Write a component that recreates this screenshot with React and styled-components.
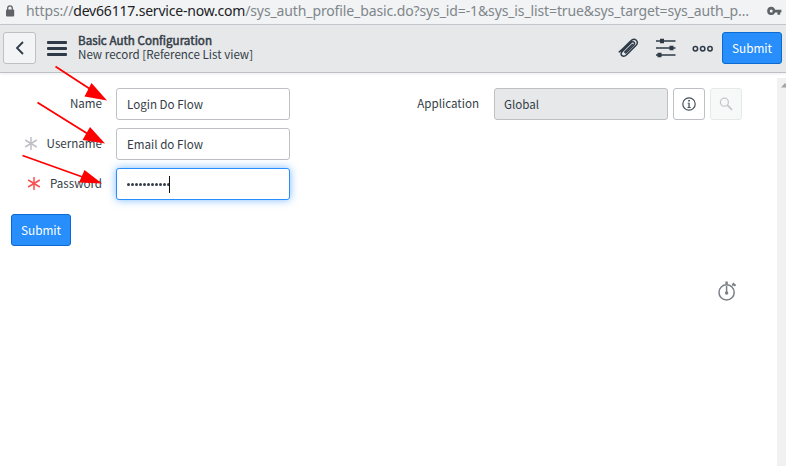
import React from "react";
import styled, { createGlobalStyle, css } from "styled-components";

const GlobalStyle = createGlobalStyle`
  * { box-sizing: border-box; }
  body {
    margin: 0;
    overflow: hidden;
    background: #fff;
    font-family: "Noto Sans CJK SC", "Noto Sans", sans-serif;
    font-size: 11.6px;
    color: #343d47;
  }
  button, input { font: inherit; color: inherit; margin: 0; }
  svg { flex: none; }
`;

const Window = styled.div`
  position: relative;
  width: 786px;
  height: 466px;
  display: flex;
  flex-direction: column;
  overflow: hidden;
`;

const AddressBar = styled.div`
  height: 25px;
  flex: none;
  display: flex;
  align-items: center;
  padding: 0 4px 3px 5px;
  background: #f1f3f4;
  border-bottom: 1px solid #c6c8d0;
`;

const Url = styled.div`
  margin-left: 11px;
  flex: 1;
  font-family: "Noto Sans", sans-serif;
  font-size: 14px;
  line-height: 20px;
  letter-spacing: -0.12px;
  white-space: nowrap;
  color: #80868b;
`;

const Host = styled.span`
  color: #202124;
  letter-spacing: -0.2px;
`;

const Header = styled.header`
  height: 48px;
  flex: none;
  display: flex;
  align-items: center;
  padding: 0 4px 1px 3px;
  background: #e6e8ea;
  border-bottom: 1px solid #bdc0c4;
  box-shadow: 0 1px 3px rgba(0, 0, 0, 0.08);
`;

const IconButton = styled.button`
  width: 32px;
  height: 32px;
  flex: none;
  padding: 0;
  display: flex;
  align-items: center;
  justify-content: center;
  border: 1px solid ${(p) => (p.$muted ? "#e6e8ea" : "#bdc0c4")};
  border-radius: 3px;
  background: ${(p) => p.$bg || "#fff"};
`;

const BackButton = styled(IconButton)`
  width: 33px;
`;

const MenuIcon = styled.div`
  width: 20px;
  height: 15px;
  margin-left: 11px;
  display: flex;
  flex-direction: column;
  justify-content: space-between;
`;

const MenuBar = styled.span`
  height: 3px;
  border-radius: 1px;
  background: #2e3a47;
`;

const Titles = styled.div`
  margin-left: 11px;
  flex: 1;
  line-height: 14px;
  padding-bottom: 2px;
  white-space: nowrap;
`;

const Title = styled.div`
  letter-spacing: 0.02px;
  -webkit-text-stroke: 0.5px #343d47;
`;

const Subtitle = styled.div``;

const Tools = styled.div`
  display: flex;
  align-items: center;
  gap: 16px;
`;

const PrimaryButton = styled.button`
  width: 60px;
  height: 32px;
  padding: 0 0 1px;
  border: 1px solid #0a6ad0;
  border-radius: 3px;
  background: #278efc;
  color: #fff;
  font-size: 11.8px;
  line-height: 18px;
`;

const HeaderSubmit = styled(PrimaryButton)`
  margin-left: -8px;
`;

const Body = styled.div`
  flex: 1;
  min-height: 0;
  display: flex;
  padding-top: 5px;
`;

const Content = styled.main`
  flex: 1;
  padding-top: 10px;
`;

const Columns = styled.div`
  display: flex;
`;

const Column = styled.div`
  display: flex;
  flex-direction: column;
  gap: 8px;
  width: ${(p) => p.$width}px;
`;

const Field = styled.div`
  display: flex;
  height: 32px;
`;

const Label = styled.label`
  width: 116px;
  display: flex;
  align-items: center;
  justify-content: flex-end;
  gap: 8px;
  padding: 0 ${(p) => p.$inset || 14}px 2px 0;
  line-height: 18px;
  white-space: nowrap;
`;

const Control = styled.div`
  width: 174px;
  height: 32px;
  padding: 0 9px 0 10px;
  display: flex;
  align-items: center;
  border: 1px solid #bdc0c4;
  border-radius: 3px;
  background: ${(p) => (p.$readOnly ? "#e6e8ea" : "#fff")};
  line-height: 18px;
  ${(p) => p.$readOnly && "padding-left: 9px;"}
  ${(p) =>
    p.$focused &&
    css`
      border-color: #278efc;
      box-shadow: 0 0 8px rgba(39, 142, 252, 0.6);
    `}
`;

const Dots = styled.span`
  display: flex;
  gap: 1px;
  padding-top: 1px;
`;

const Dot = styled.i`
  width: 3px;
  height: 3px;
  border-radius: 50%;
  background: #343d47;
`;

const Caret = styled.span`
  width: 1px;
  height: 17px;
  margin-left: -1px;
  background: #111;
`;

const Actions = styled.div`
  padding: 14px 0 0 11px;
`;

const FieldButtons = styled.div`
  display: flex;
  gap: 5px;
  margin-left: 5px;
`;

const TimerRow = styled.div`
  display: flex;
  justify-content: flex-end;
  padding: 35px 40px 0 0;
`;

const Scrollbar = styled.div`
  width: 9px;
  flex: none;
  background: #f1f1f1;
  overflow: hidden;
  padding: 5px 0 0 4px;
  line-height: 0;
`;

const Annotations = styled.svg`
  position: absolute;
  left: 0;
  top: 0;
  pointer-events: none;
`;

const Required = ({ color }) => (
  <svg width="15" height="16" viewBox="0 0 15 16" fill="none" stroke={color} strokeWidth="1.5">
    <path d="M7 2v13M1.2 5l11.6 7M12.8 5 1.2 12" />
  </svg>
);

const Lock = () => (
  <svg width="10" height="12" viewBox="0 0 10 12">
    <path d="M2.7 5V3.2a2.3 2.3 0 0 1 4.6 0V5" fill="none" stroke="#5f6368" strokeWidth="1.3" />
    <rect x="1" y="4.4" width="8.2" height="7" rx="1" fill="#5f6368" />
  </svg>
);

const Key = () => (
  <svg width="15" height="10" viewBox="0 0 15 10">
    <path
      fill="#5f6368"
      fillRule="evenodd"
      d="M4.2.8a4.1 4.1 0 0 1 3.9 2.9h6.3v2.7h-1.2v2.4h-2.8V6.4H8.1A4.1 4.1 0 1 1 4.2.8zm0 2.7a1.5 1.5 0 1 0 0 3 1.5 1.5 0 0 0 0-3z"
    />
  </svg>
);

const Chevron = () => (
  <svg width="10" height="14" viewBox="0 0 10 14" fill="none" stroke="#2e3a47" strokeWidth="1.8">
    <path d="M8 1 2 7l6 6" />
  </svg>
);

const Paperclip = () => (
  <svg width="22" height="20" viewBox="0 0 22 20" fill="none" stroke="#2e3a47" strokeWidth="1.5" strokeLinecap="round" strokeLinejoin="round">
    <path d="M3 12.6 12.4 3.2c1.8-1.8 3.8-2.6 5.6-1.2 2 1.6 1.6 3.9-.1 5.5l-9 9c-1.4 1.4-3.2 2.6-4.9 1.2-1.6-1.4-.9-3.2.5-4.6l8.3-8.2c1-1 2.2-1.5 3.2-.7 1 .9.6 2.1-.4 3.1l-7.8 7.7" />
    <path d="m6.8 14.1 7.6-7.6M1.2 13.9l2-1.5" />
  </svg>
);

const Sliders = () => (
  <svg width="20" height="20" viewBox="0 0 20 20">
    <path d="M0 3h19.5M0 10h19.5M0 17h19.5" stroke="#2e3a47" strokeWidth="1.5" />
    <path d="M4 .7h4v4.6H4zM13.5 7.7h4v4.6h-4zM1.5 14.7h4v4.6h-4z" fill="#2e3a47" />
  </svg>
);

const More = () => (
  <svg width="22" height="8" viewBox="0 0 22 8" fill="none" stroke="#2e3a47" strokeWidth="1.5">
    <circle cx="3.4" cy="4.8" r="2.2" />
    <circle cx="10.7" cy="4.8" r="2.2" />
    <circle cx="18" cy="4.8" r="2.2" />
  </svg>
);

const Info = () => (
  <svg width="14" height="14" viewBox="0 0 14 14">
    <circle cx="7" cy="7" r="6.2" fill="none" stroke="#46515c" strokeWidth="1.2" />
    <path d="M6.2 3h1.7v1.6H6.2zM5.6 5.7h2.1v4.4h1v.9H5.5v-.9h.9V6.6h-.8z" fill="#46515c" />
  </svg>
);

const Search = () => (
  <svg width="14" height="14" viewBox="0 0 14 14" fill="none" stroke="#c3c7ca" strokeWidth="1.3">
    <circle cx="5.4" cy="5.2" r="4" />
    <path d="m8.4 8.2 4.6 4.6" strokeWidth="1.7" />
  </svg>
);

const Stopwatch = () => (
  <svg width="19" height="20" viewBox="0 0 19 20" fill="none" stroke="#7a8087" strokeWidth="1.5">
    <circle cx="8.6" cy="11.4" r="7.6" />
    <path d="M8.6 5v7" />
    <path d="M8.6.5v3" strokeWidth="2.4" />
    <path d="m14.2 4.6 1.6-1.6" />
    <path d="m14.6 2.4 3 2.4" strokeWidth="2" />
    <circle cx="8.6" cy="12" r="1" fill="#7a8087" />
  </svg>
);

const ARROWS = [
  { line: "M55.5 66.5 90 89", head: "M107 100.5 84.5 96.5 91.5 83z" },
  { line: "M37.5 102.5 88 134", head: "M105 143.5 82.5 140 90 127z" },
  { line: "M22.5 155.5 84 177.5", head: "M102 183.5 79 182.5 84.5 170z" },
];

export default function App() {
  return (
    <Window>
      <GlobalStyle />
      <AddressBar>
        <Lock />
        <Url>
          https://<Host>dev66117.service-now.com</Host>
          /sys_auth_profile_basic.do?sys_id=-1&amp;sys_is_list=true&amp;sys_target=sys_auth_p…
        </Url>
        <Key />
      </AddressBar>
      <Header>
        <BackButton $bg="#f3f4f5" aria-label="Back">
          <Chevron />
        </BackButton>
        <MenuIcon>
          <MenuBar />
          <MenuBar />
          <MenuBar />
        </MenuIcon>
        <Titles>
          <Title>Basic Auth Configuration</Title>
          <Subtitle>New record [Reference List view]</Subtitle>
        </Titles>
        <Tools>
          <Paperclip />
          <Sliders />
          <More />
          <HeaderSubmit>Submit</HeaderSubmit>
        </Tools>
      </Header>
      <Body>
        <Content>
          <Columns>
            <Column $width={378}>
              <Field>
                <Label>Name</Label>
                <Control>Login Do Flow</Control>
              </Field>
              <Field>
                <Label>
                  <Required color="#bdc0c4" />
                  Username
                </Label>
                <Control>Email do Flow</Control>
              </Field>
              <Field>
                <Label>
                  <Required color="#f95050" />
                  Password
                </Label>
                <Control $focused>
                  <Dots>
                    {Array.from({ length: 11 }, (_, i) => (
                      <Dot key={i} />
                    ))}
                  </Dots>
                  <Caret />
                </Control>
              </Field>
            </Column>
            <Field>
              <Label $inset={15}>Application</Label>
              <Control $readOnly>Global</Control>
              <FieldButtons>
                <IconButton aria-label="Info">
                  <Info />
                </IconButton>
                <IconButton $muted $bg="#f7f8f8" aria-label="Search">
                  <Search />
                </IconButton>
              </FieldButtons>
            </Field>
          </Columns>
          <Actions>
            <PrimaryButton>Submit</PrimaryButton>
          </Actions>
          <TimerRow>
            <Stopwatch />
          </TimerRow>
        </Content>
        <Scrollbar>
          <svg width="8" height="5" viewBox="0 0 8 5">
            <path d="M4 0 8 4.5H0z" fill="#a3a3a3" />
          </svg>
        </Scrollbar>
      </Body>
      <Annotations width="130" height="200" viewBox="0 0 130 200">
        {ARROWS.map((a) => (
          <g key={a.line}>
            <path d={a.line} stroke="#f00" strokeWidth="1.8" />
            <path d={a.head} fill="#f00" />
          </g>
        ))}
      </Annotations>
    </Window>
  );
}
